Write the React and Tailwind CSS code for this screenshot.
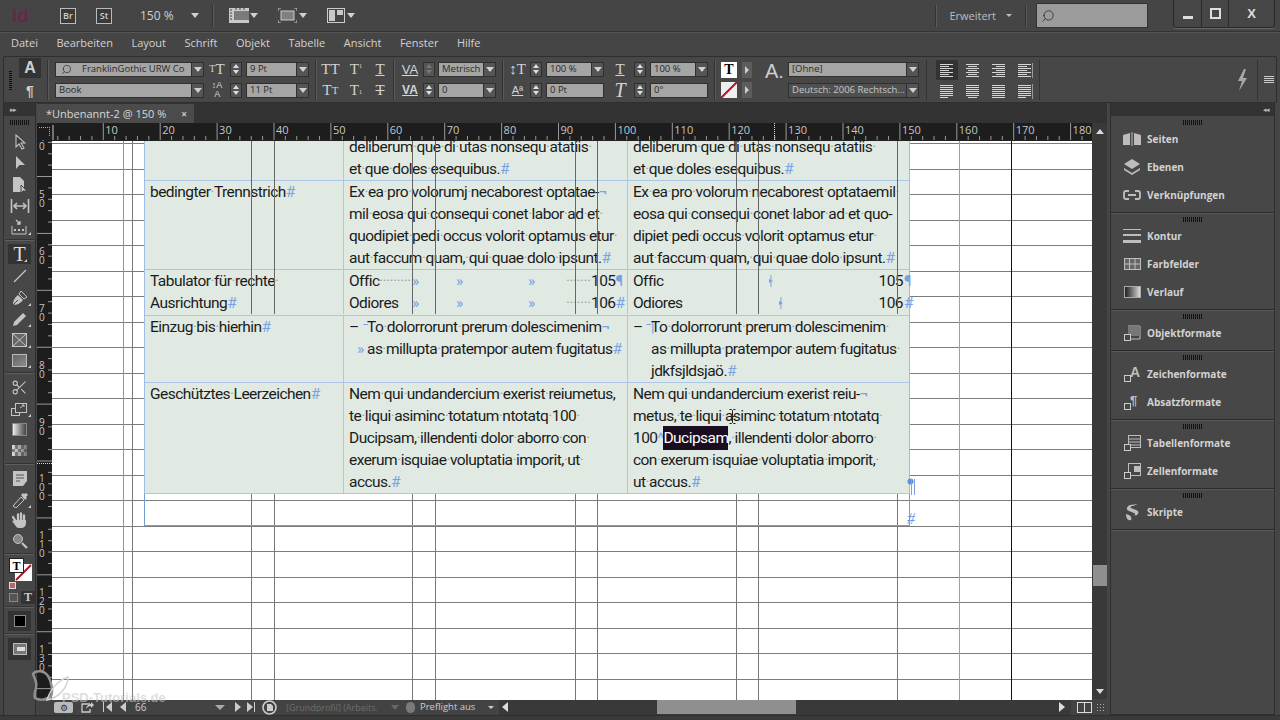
import { Scissors, Search } from 'lucide-react';

const MENU = ['Datei', 'Bearbeiten', 'Layout', 'Schrift', 'Objekt', 'Tabelle', 'Ansicht', 'Fenster', 'Hilfe'];
const H_LINES = Array.from({ length: 22 }, (_, i) => 2 + i * 25.5);
const V_LINES = [71, 80, 199, 222, 360, 383, 523, 545, 684, 706, 845];

function Ic({ w = 16, h = 16, vb, className = '', children }) {
  return (
    <svg width={w} height={h} viewBox={vb || `0 0 ${w} ${h}`} className={`shrink-0 ${className}`} fill="none">
      {children}
    </svg>
  );
}

function Grip({ className = '' }) {
  return <div className={`h-[5px] w-[20px] bg-[repeating-linear-gradient(90deg,#111_0_1px,#474747_1px_2px)] ${className}`} />;
}

function Arrow({ className = '' }) {
  return <div className={`w-0 h-0 border-l-[4px] border-r-[4px] border-t-[5px] border-l-transparent border-r-transparent border-t-[#d0d0d0] ${className}`} />;
}

function Field({ text, w, arrow = true, dark = false, children }) {
  return (
    <div className={`flex h-[15px] shrink-0 border border-[#2f2f2f] ${dark ? 'bg-[#505050] text-[#c8c8c8]' : 'bg-[#a5a5a5] text-[#2a2a2a]'}`} style={{ width: w }}>
      <div className="flex flex-1 items-center gap-1 overflow-hidden whitespace-nowrap pl-[3px] text-[9.5px] leading-none">
        {children}
        {text}
      </div>
      {arrow && (
        <div className="flex w-[12px] items-center justify-center border-l border-[#2f2f2f] bg-[#555]">
          <Arrow />
        </div>
      )}
    </div>
  );
}

function Spin({ dim = false }) {
  const c = dim ? 'border-b-[#777]' : 'border-b-[#ddd]';
  const d = dim ? 'border-t-[#777]' : 'border-t-[#ddd]';
  return (
    <div className="flex h-[15px] w-[12px] shrink-0 flex-col items-center justify-center gap-[2px] border border-[#2f2f2f] bg-[#555]">
      <div className={`h-0 w-0 border-x-[3px] border-b-[4px] border-x-transparent ${c}`} />
      <div className={`h-0 w-0 border-x-[3px] border-t-[4px] border-x-transparent ${d}`} />
    </div>
  );
}

function Sep() {
  return <div className="mx-[6px] h-[40px] w-px shrink-0 self-center bg-[#333] shadow-[1px_0_0_#5a5a5a]" />;
}

function Glyph({ children, w = 17, className = '' }) {
  return (
    <div className={`flex h-[15px] shrink-0 items-center justify-center font-['Liberation_Serif',serif] text-[15px] leading-none text-[#d4d4d4] ${className}`} style={{ width: w }}>
      {children}
    </div>
  );
}

function AlignIcon({ rows, bar }) {
  return (
    <Ic w={16} h={15}>
      {rows.map(([x, w], i) => (
        <rect key={i} x={x} y={1 + i * 2} width={w} height="1" fill="#d6d6d6" />
      ))}
      {bar && <rect x="15" y="0" width="1" height="15" fill="#999" />}
    </Ic>
  );
}

const AL_LEFT = [[1, 13], [1, 9], [1, 13], [1, 9], [1, 13], [1, 9], [1, 13]];
const AL_CENTER = [[1, 13], [3, 9], [1, 13], [3, 9], [1, 13], [3, 9], [1, 13]];
const AL_RIGHT = [[1, 13], [5, 9], [1, 13], [5, 9], [1, 13], [5, 9], [1, 13]];
const AL_J1 = [[1, 13], [1, 13], [1, 13], [1, 13], [1, 13], [1, 13], [1, 8]];
const AL_J2 = [[1, 13], [1, 13], [1, 13], [1, 13], [1, 13], [1, 13], [3, 9]];
const AL_J3 = [[1, 13], [1, 13], [1, 13], [1, 13], [1, 13], [1, 13], [1, 13]];

function TitleBar() {
  return (
    <div className="flex h-[32px] shrink-0 items-center border-b border-[#333] pl-[12px] text-[#cfcfcf] shadow-[0_1px_0_#555]">
      <div className="w-[22px] font-['Liberation_Sans',sans-serif] text-[19px] font-bold leading-none text-[#6d2549]">Id</div>
      <div className="ml-[26px] flex h-[16px] w-[16px] items-center justify-center border border-[#bbb] bg-[#3a3a3a] text-[9px] font-semibold leading-none">Br</div>
      <div className="ml-[20px] flex h-[16px] w-[16px] items-center justify-center border border-[#bbb] bg-[#3a3a3a] text-[9px] font-semibold leading-none">St</div>
      <div className="ml-[28px] w-[44px] whitespace-nowrap text-[12px] leading-none">150 %</div>
      <Arrow className="ml-[7px]" />
      <div className="ml-[13px] h-[22px] w-px bg-[#333] shadow-[1px_0_0_#5a5a5a]" />
      <Ic w={20} h={15} className="ml-[16px]">
        <rect x="0" y="0" width="20" height="15" fill="#c9c9c9" />
        <rect x="5" y="3" width="15" height="9" fill="#7b7b7b" />
        <path d="M1 2h2M1 5h2M1 8h2M1 11h2M6 1h2M10 1h2M14 1h2" stroke="#444" />
      </Ic>
      <Arrow className="ml-[1px]" />
      <Ic w={19} h={15} className="ml-[20px]">
        <rect x="3" y="3" width="13" height="9" fill="#808080" stroke="#ccc" />
        <path d="M0 3V0h3M16 0h3v3M0 12v3h3M16 15h3v-3" stroke="#ccc" />
      </Ic>
      <Arrow className="ml-[2px]" />
      <Ic w={18} h={15} className="ml-[20px]">
        <rect x="0.5" y="0.5" width="17" height="14" fill="#444" stroke="#ccc" />
        <rect x="2" y="2" width="6" height="11" fill="#c9c9c9" />
        <rect x="10" y="2" width="6" height="5" fill="#c9c9c9" />
      </Ic>
      <Arrow className="ml-[2px]" />

      <div className="ml-auto h-[22px] w-px bg-[#333] shadow-[1px_0_0_#5a5a5a]" />
      <div className="ml-[13px] whitespace-nowrap text-[11px] leading-none text-[#bdbdbd]">Erweitert</div>
      <div className="ml-[10px] h-0 w-0 border-x-[3px] border-t-[3px] border-x-transparent border-t-[#bbb]" />
      <div className="ml-[13px] h-[22px] w-px bg-[#333] shadow-[1px_0_0_#5a5a5a]" />
      <div className="ml-[10px] flex h-[25px] w-[112px] items-center border border-[#333] bg-[#9b9b9b] pl-[4px]">
        <Search size={14} strokeWidth={1.5} className="-scale-x-100 text-[#333]" />
      </div>
      <div className="ml-[25px] flex h-[28px] w-[102px] self-start rounded-b-[3px] border border-t-0 border-[#2a2a2a] bg-[#464646] shadow-[0_1px_0_#666]">
        <div className="flex w-[28px] items-end justify-center border-r border-[#2a2a2a] pb-[8px]"><div className="h-[3px] w-[10px] bg-[#ddd]" /></div>
        <div className="flex w-[27px] items-center justify-center border-r border-[#2a2a2a]"><div className="h-[11px] w-[11px] border-2 border-[#ddd]" /></div>
        <div className="flex flex-1 items-center justify-center font-['Liberation_Sans',sans-serif] text-[13px] font-bold leading-none text-[#ddd]">X</div>
      </div>
      <div className="w-[5px]" />
    </div>
  );
}

function MenuBar() {
  return (
    <div className="flex h-[24px] shrink-0 items-center gap-[18.5px] pb-[3px] pl-[11px] text-[11px] leading-none text-[#d2d2d2]">
      {MENU.map((m) => (
        <span key={m}>{m}</span>
      ))}
    </div>
  );
}

function ControlBar() {
  return (
    <div className="mx-[3px] flex h-[47px] shrink-0 items-stretch rounded-[2px] border border-[#2e2e2e] bg-[#474747]">
      <div className="ml-[5px] mt-[13px] h-[20px] w-[3px] bg-[repeating-linear-gradient(0deg,#111_0_1px,#474747_1px_2px)]" />
      <div className="ml-[7px] flex w-[22px] flex-col items-center">
        <div className="mt-[1px] flex h-[20px] w-[22px] items-center justify-center bg-[#333] font-['Liberation_Sans',sans-serif] text-[16px] font-bold leading-none text-[#cfcfcf]">A</div>
        <div className="mt-[4px] font-['Liberation_Sans',sans-serif] text-[14px] font-bold leading-[18px] text-[#cfcfcf]">¶</div>
      </div>
      <Sep />
      <div className="ml-[1px] flex flex-col justify-center gap-[6px]">
        <div className="flex items-center gap-[4px]">
          <Field w={149} text="FranklinGothic URW Co">
            <Search size={11} strokeWidth={1.6} className="ml-[2px] -scale-x-100 text-[#333]" />
            <span className="w-[2px]" />
          </Field>
          <Glyph w={18}><span className="text-[10px]">T</span>T</Glyph>
          <Spin />
          <Field w={63} text="9 Pt" />
        </div>
        <div className="flex items-center gap-[4px]">
          <Field w={149} text="Book" />
          <Glyph w={18}><span className="font-['Liberation_Sans',sans-serif] text-[9px] leading-[9px]">↕A<br />&nbsp;A</span></Glyph>
          <Spin />
          <Field w={63} text="11 Pt" />
        </div>
      </div>
      <Sep />
      <div className="flex flex-col justify-center gap-[6px]">
        <div className="flex gap-[9px]">
          <Glyph>TT</Glyph>
          <Glyph w={16}>T<sup className="text-[7px]">1</sup></Glyph>
          <Glyph w={14} className="underline">T</Glyph>
        </div>
        <div className="flex gap-[9px]">
          <Glyph>T<span className="text-[11px]">T</span></Glyph>
          <Glyph w={16}>T<sub className="text-[7px]">1</sub></Glyph>
          <Glyph w={14} className="line-through">T</Glyph>
        </div>
      </div>
      <Sep />
      <div className="flex flex-col justify-center gap-[6px]">
        <div className="flex items-center gap-[3px]">
          <Glyph w={20}><span className="font-['Liberation_Sans',sans-serif] text-[13px] underline">VA</span></Glyph>
          <Spin dim />
          <Field w={58} text="Metrisch" />
        </div>
        <div className="flex items-center gap-[3px]">
          <Glyph w={20}><span className="font-['Liberation_Sans',sans-serif] text-[12px] font-bold underline">VA</span></Glyph>
          <Spin />
          <Field w={58} text="0" />
        </div>
      </div>
      <Sep />
      <div className="flex flex-col justify-center gap-[6px]">
        <div className="flex items-center gap-[4px]">
          <Glyph>↕T</Glyph>
          <Spin />
          <Field w={58} text="100 %" />
          <Glyph w={20} className="ml-[2px] underline">T</Glyph>
          <Spin />
          <Field w={58} text="100 %" />
        </div>
        <div className="flex items-center gap-[4px]">
          <Glyph><span className="font-['Liberation_Sans',sans-serif] text-[11px] underline">Aª</span></Glyph>
          <Spin />
          <Field w={58} text="0 Pt" arrow={false} />
          <Glyph w={20} className="ml-[2px] italic !text-[20px]">T</Glyph>
          <Spin />
          <Field w={58} text="0°" arrow={false} />
        </div>
      </div>
      <Sep />
      <div className="flex flex-col justify-center gap-[4px]">
        <div className="flex items-center gap-[5px]">
          <div className="flex h-[16px] w-[16px] items-center justify-center bg-white font-['Liberation_Serif',serif] text-[14px] font-black leading-none text-black">T</div>
          <div className="flex h-[16px] w-[10px] items-center justify-center bg-[#5d5d5d]"><div className="h-0 w-0 border-y-[4px] border-l-[4px] border-y-transparent border-l-[#ccc]" /></div>
        </div>
        <div className="flex items-center gap-[5px]">
          <Ic w={16} h={16}>
            <rect width="16" height="16" fill="#eee" />
            <path d="M0 16 16 0" stroke="#b0132b" strokeWidth="2" />
          </Ic>
          <div className="flex h-[16px] w-[10px] items-center justify-center bg-[#5d5d5d]"><div className="h-0 w-0 border-y-[4px] border-l-[4px] border-y-transparent border-l-[#ccc]" /></div>
        </div>
      </div>
      <div className="ml-[13px] flex w-[23px] flex-col">
        <div className="mt-[2px] font-['Liberation_Sans',sans-serif] text-[20px] leading-[24px] text-[#cfcfcf]">A.</div>
      </div>
      <div className="flex flex-col justify-center gap-[6px]">
        <Field w={131} text="[Ohne]" />
        <Field w={131} text="Deutsch: 2006 Rechtsch..." dark />
      </div>
      <div className="ml-[7px] mr-[12px] h-[40px] w-px self-center bg-[#333]" />
      <div className="flex flex-col justify-center gap-[4px]">
        <div className="flex items-center gap-[10px]">
          <div className="-mx-[3px] flex h-[20px] w-[22px] items-center justify-center bg-[#333]"><AlignIcon rows={AL_LEFT} /></div>
          <AlignIcon rows={AL_CENTER} />
          <AlignIcon rows={AL_RIGHT} />
          <AlignIcon rows={AL_LEFT} bar />
        </div>
        <div className="flex items-center gap-[10px]">
          <AlignIcon rows={AL_J1} />
          <AlignIcon rows={AL_J2} />
          <AlignIcon rows={AL_J3} />
          <AlignIcon rows={AL_J1} bar />
        </div>
      </div>
      <div className="mx-[6px] h-[40px] w-px self-center bg-[#333]" />
      <div className="ml-auto flex items-center">
        <Ic w={12} h={22}>
          <path d="M8 0 2 12h4L3 22l8-13H7l3-9Z" fill="#a8a8a8" />
        </Ic>
        <div className="ml-[9px] h-[40px] w-px bg-[#333]" />
        <div className="ml-[6px] mr-[2px] flex flex-col gap-[1px]">
          {[0, 1, 2, 3].map((i) => <div key={i} className="h-px w-[10px] bg-[#ccc]" />)}
        </div>
      </div>
    </div>
  );
}

function Tool({ y, active, corner, children }) {
  return (
    <div className={`relative flex items-center justify-center ${active ? 'mx-[4px] bg-[#333]' : ''}`} style={{ height: y }}>
      {children}
      {corner && <div className="absolute bottom-[2px] right-[4px] h-0 w-0 border-b-[3px] border-l-[3px] border-l-transparent border-b-[#ccc]" />}
    </div>
  );
}

function ToolSep() {
  return <div className="mx-[1px] my-[3px] h-px bg-[#5e5e5e] shadow-[0_-1px_0_#333]" />;
}

function Toolbar() {
  const c = '#c4c4c4';
  return (
    <div className="ml-[3px] flex w-[33px] shrink-0 flex-col border-x border-[#2e2e2e] bg-[#474747]">
      <div className="flex h-[13px] items-center bg-[#333] pl-[6px]">
        <span className="text-[7px] leading-none tracking-[-1px] text-[#bbb]">▸▸</span>
      </div>
      <div className="mx-auto mt-[4px] mb-[6px]"><Grip /></div>
      <Tool y={21}><Ic w={12} h={16}><path d="M2 1v12l3-3 3 5 2-1-3-5h4Z" fill="#3a3a3a" stroke={c} strokeWidth="1.1" /></Ic></Tool>
      <Tool y={22}><Ic w={12} h={16}><path d="M2 1v13l3.5-4H11Z" fill={c} /></Ic></Tool>
      <Tool y={21}>
        <Ic w={16} h={18}>
          <path d="M1 1h7l4 4v6h-3v5H1Z" fill={c} />
          <path d="M9 9v8l2-2h4Z" fill={c} stroke="#474747" />
        </Ic>
      </Tool>
      <Tool y={21}>
        <Ic w={20} h={16}>
          <path d="M1.5 1v14M18.5 1v14M4 8h12" stroke={c} strokeWidth="1.6" />
          <path d="M7 5 4 8l3 3M13 5l3 3-3 3" stroke={c} strokeWidth="1.6" />
        </Ic>
      </Tool>
      <Tool y={21} corner>
        <Ic w={18} h={16}>
          <path d="M1 7v8h14V7" stroke={c} />
          <path d="M3 10h2v2H3ZM7 10h2v2H7ZM11 10h2v2h-2Z" fill={c} />
          <path d="M5 1l4 4M9 2v3H6" stroke={c} strokeWidth="1.3" />
        </Ic>
      </Tool>
      <ToolSep />
      <Tool y={20} active corner>
        <span className="font-['Liberation_Serif',serif] text-[20px] leading-none text-[#ddd]">T</span>
      </Tool>
      <Tool y={23}><Ic w={14} h={14}><path d="M1 13 13 1" stroke={c} strokeWidth="1.2" /></Ic></Tool>
      <Tool y={21} corner>
        <Ic w={16} h={16}>
          <path d="M1 15C1 9 4 7 6 5l5 5c-2 2-4 5-10 5Z" fill={c} />
          <path d="m7 4 2-3 6 6-3 2Z" stroke={c} />
          <path d="M1 15 6 10" stroke="#474747" />
        </Ic>
      </Tool>
      <Tool y={21} corner>
        <Ic w={16} h={16}>
          <path d="M1 15l1-4L11 2l3 3-9 9Z" fill={c} />
        </Ic>
      </Tool>
      <Tool y={21} corner>
        <Ic w={15} h={14}>
          <rect x="0.5" y="0.5" width="14" height="13" fill="#666" stroke={c} />
          <path d="M1 1l13 12M14 1 1 13" stroke={c} />
        </Ic>
      </Tool>
      <Tool y={20} corner>
        <div className="h-[13px] w-[15px] border border-[#bbb] bg-linear-to-br from-[#666] to-[#8b8b8b]" />
      </Tool>
      <ToolSep />
      <Tool y={21}><Scissors size={17} strokeWidth={1.5} color={c} /></Tool>
      <Tool y={21} corner>
        <Ic w={17} h={15}>
          <rect x="0.5" y="7.5" width="8" height="7" stroke={c} />
          <rect x="4.5" y="2.5" width="11" height="9" stroke={c} fill="#474747" />
          <path d="M9 7l4-3M11 4h2v2" stroke={c} />
        </Ic>
      </Tool>
      <Tool y={21}><div className="h-[13px] w-[15px] border border-[#888] bg-linear-to-r from-[#eee] to-[#444]" /></Tool>
      <Tool y={21}>
        <div className="grid h-[11px] w-[15px] grid-cols-5 bg-linear-to-r from-[#ddd] to-[#777]">
          {Array.from({ length: 15 }, (_, i) => (
            <div key={i} className={i % 2 ? 'bg-[#444]/60' : ''} />
          ))}
        </div>
      </Tool>
      <ToolSep />
      <Tool y={21}>
        <Ic w={14} h={15}>
          <path d="M0 0h14v10l-4 5H0Z" fill={c} />
          <path d="M3 4h8M3 7h8M3 10h4" stroke="#555" />
        </Ic>
      </Tool>
      <Tool y={21} corner>
        <Ic w={18} h={16}>
          <path d="M2 14 10 5l3 3-8 8Z" stroke={c} />
          <path d="m10 3 2-2 1 1 2-1 2 2-2 2 1 1-2 2Z" fill={c} />
        </Ic>
      </Tool>
      <Tool y={20}>
        <Ic w={17} h={17}>
          <path d="M4.5 9 2 5M7 8V2.5M10 8V1.5M13 8.500V3.500" stroke={c} strokeWidth="2.3" strokeLinecap="round" />
          <path d="M4 8h11v3c0 3-2 5-5 5H8c-2 0-3-1-4-3L1 9Z" fill={c} />
        </Ic>
      </Tool>
      <Tool y={21}>
        <Ic w={16} h={16}>
          <circle cx="6" cy="6" r="4.5" fill="#888" stroke={c} />
          <path d="m10 10 5 5" stroke={c} strokeWidth="2.2" />
        </Ic>
      </Tool>
      <ToolSep />
      <div className="relative h-[33px] shrink-0">
        <div className="absolute left-[11px] top-[6px] h-[17px] w-[17px] bg-white">
          <Ic w={17} h={17}><path d="M1 16 16 1" stroke="#b0132b" strokeWidth="2" /></Ic>
        </div>
        <div className="absolute left-[5px] top-0 flex h-[15px] w-[15px] items-center justify-center border border-[#222] bg-white font-['Liberation_Serif',serif] text-[12px] font-black leading-none text-black">T</div>
        <div className="absolute left-[5px] top-[24px] h-[7px] w-[7px] border border-[#ddd] bg-[#b66]" />
      </div>
      <div className="flex h-[13px] items-center gap-[3px] pl-[5px]">
        <div className="h-[9px] w-[9px] border border-[#888] bg-[#555]" />
        <div className="bg-[#333] px-[3px] font-['Liberation_Serif',serif] text-[12px] font-bold leading-[13px] text-[#ccc]">T</div>
      </div>
      <ToolSep />
      <div className="relative mx-[4px] flex h-[20px] items-center justify-center bg-[#333]">
        <div className="h-[12px] w-[12px] border border-[#888] bg-black" />
      </div>
      <ToolSep />
      <div className="relative mx-[4px] flex h-[22px] items-center justify-center bg-[#333]">
        <div className="h-[12px] w-[14px] border border-[#bbb] bg-[#777]">
          <div className="ml-[3px] mt-[3px] h-[4px] w-[8px] bg-[#ddd]" />
        </div>
      </div>
    </div>
  );
}

function TopRuler() {
  const ticks = [];
  for (let v = 1; v < 1040 / 11.38; v++) ticks.push(v);
  return (
    <svg width="1040" height="17" className="block">
      {ticks.map((i) => {
        const x = i * 11.38 - 5.6;
        const major = i % 5 === 0;
        return <line key={i} x1={x} x2={x} y1={major ? 0 : 13} y2={17} stroke="#9a9a9a" strokeWidth="1" />;
      })}
      {Array.from({ length: 18 }, (_, i) => (
        <text key={i} x={51.3 + i * 56.9 + 2} y="11" fill="#c6c6c6" fontSize="11" fontFamily="Open Sans, sans-serif">{(i + 1) * 10}</text>
      ))}
      <line x1="1" x2="1" y1="2" y2="17" stroke="#ccc" />
      <line x1="722.5" x2="722.5" y1="0" y2="17" stroke="#ddd" strokeDasharray="1 1" />
    </svg>
  );
}

function LeftRuler() {
  const ticks = [];
  for (let i = 0; i < 50; i++) ticks.push(i);
  const labels = ['40', '50', '60', '70', '80', '90', '100', '110', '120', '130'];
  return (
    <svg width="15" height="560" className="block">
      {ticks.map((i) => {
        const y = i * 11.38 - 9;
        return <line key={i} x1={i % 5 === 4 ? 0 : 11} x2={15} y1={y} y2={y} stroke="#9a9a9a" />;
      })}
      {labels.map((s, i) => {
        const top = -9 + i * 56.9;
        return s.split('').map((ch, j) => (
          <text key={`${i}-${j}`} x="2" y={top + 10 + j * 9} fill="#c6c6c6" fontSize="10" fontFamily="Open Sans, sans-serif">{ch}</text>
        ));
      })}
      <line x1="0" x2="15" y1="323.5" y2="323.5" stroke="#ddd" strokeDasharray="1 1" />
    </svg>
  );
}

function Words({ t }) {
  const parts = t.split(/( |#|¶|¬|»)/).filter(Boolean);
  return parts.map((p, i) => {
    if (p === ' ') return <span key={i} className="text-[#9aa89e]">·</span>;
    if (p === '#' || p === '¶' || p === '¬' || p === '»') return <span key={i} className="text-[#7aa2e3]">{p}</span>;
    return <span key={i}>{p}</span>;
  });
}

function L({ children, t, className = '' }) {
  return (
    <div className={`h-[22px] whitespace-nowrap leading-[22px] ${className}`}>
      {t && <Words t={t} />}
      {children}
    </div>
  );
}

function TabMark() {
  return (
    <Ic w={6} h={12} className="inline-block align-[-1px]">
      <path d="M3 0v12" stroke="#7aa2e3" />
      <path d="M1 4l4 2-4 2Z" fill="#7aa2e3" />
    </Ic>
  );
}

function Cell({ first, children }) {
  return <div className={`pl-[5px] ${first ? '' : 'border-l border-[#abc6e6]'}`}>{children}</div>;
}

function Row({ a, b, c, extra = '' }) {
  return (
    <div className={`grid grid-cols-[198px_284px_282px] border-b border-[#abc6e6] ${extra}`}>
      <Cell first>{a}</Cell>
      <Cell>{b}</Cell>
      <Cell>{c}</Cell>
    </div>
  );
}

function TabRow({ name, nameW, tail, mark }) {
  return (
    <L className="flex items-center">
      <span style={{ width: nameW }}>{name}</span>
      {mark}
      <span className="w-[44px] text-[#7aa2e3]">»</span>
      <span className="w-[72px] text-[#7aa2e3]">»</span>
      <span className="w-[38px] text-[#7aa2e3]">»</span>
      <span className="w-[25px] overflow-hidden text-[#9aa89e]">········</span>
      <span>{tail}</span>
    </L>
  );
}

function DocTable() {
  return (
    <div className="relative z-10 -mt-[5px] ml-[92px] w-[766px] border-x border-[#9dbce6] bg-[#e0eae3] font-['Roboto',sans-serif] text-[15.5px] tracking-[-0.035em] text-[#1b1b1b]">
      <Row
        a={<><L /><L /></>}
        b={<><L t="deliberum que di utas nonsequ atatiis " /><L t="et que doles esequibus.#" /></>}
        c={<><L t="deliberum que di utas nonsequ atatiis " /><L t="et que doles esequibus.#" /></>}
      />
      <Row
        a={<L t="bedingter Trennstrich#" />}
        b={<><L t="Ex ea pro volorumj necaborest optatae-¬" /><L t="mil eosa qui consequi conet labor ad et " /><L t="quodipiet pedi occus volorit optamus etur " /><L t="aut faccum quam, qui quae dolo ipsunt.#" /></>}
        c={<><L t="Ex ea pro volorum necaborest optataemil " /><L t="eosa qui consequi conet labor ad et quo-" /><L t="dipiet pedi occus volorit optamus etur " /><L t="aut faccum quam, qui quae dolo ipsunt.#" /></>}
      />
      <Row
        extra="pb-px"
        a={<><L t="Tabulator für rechte " /><L t="Ausrichtung#" /></>}
        b={
          <>
            <TabRow
              name="Offic"
              nameW={25}
              mark={<span className="w-[38px] overflow-hidden pl-[5px] text-[#9aa89e]">··········</span>}
              tail={<>105<span className="text-[#7aa2e3]">¶</span></>}
            />
            <TabRow
              name="Odiores"
              nameW={63}
              tail={<>106<span className="text-[#7aa2e3]">#</span></>}
            />
          </>
        }
        c={
          <>
            <L className="flex items-center">
              <span className="w-[135px]">Offic</span>
              <TabMark />
              <span className="ml-auto mr-[1px]">105</span>
              <span className="w-[5px] text-[#7aa2e3]">¶</span>
            </L>
            <L className="flex items-center">
              <span className="w-[145px]">Odiores</span>
              <TabMark />
              <span className="ml-auto mr-[1px]">106</span>
              <span className="w-[5px] text-[#7aa2e3]">#</span>
            </L>
          </>
        }
      />
      <Row
        a={<L t="Einzug bis hierhin#" />}
        b={
          <>
            <L className="flex">
              <span className="w-[18px]">–<span className="ml-[4px] text-[#7aa2e3]">⁻</span></span>
              <span><Words t="To dolorrorunt prerum dolescimenim¬" /></span>
            </L>
            <L className="flex">
              <span className="w-[18px] pl-[8px] text-[#7aa2e3]">»</span>
              <span><Words t="as millupta pratempor autem fugitatus#" /></span>
            </L>
            <L />
          </>
        }
        c={
          <>
            <L className="flex">
              <span className="w-[18px]">–<span className="ml-[3px] text-[#7aa2e3]">⁻|</span></span>
              <span><Words t="To dolorrorunt prerum dolescimenim " /></span>
            </L>
            <L className="pl-[18px]" t="as millupta pratempor autem fugitatus " />
            <L className="pl-[18px]" t="jdkfsjldsjaö.#" />
          </>
        }
      />
      <Row
        a={<L t="Geschütztes Leerzeichen#" />}
        b={<><L t="Nem qui undandercium exerist reiumetus," /><L t="te liqui asiminc totatum ntotatq 100 " /><L t="Ducipsam, illendenti dolor aborro con " /><L t="exerum isquiae voluptatia imporit, ut " /><L t="accus.#" /></>}
        c={
          <>
            <L t="Nem qui undandercium exerist reiu-¬" />
            <L t="metus, te liqui asiminc totatum ntotatq " />
            <L>
              100<span className="text-[#7aa2e3]">^</span>
              <span className="bg-[#1a0d1f] py-[3px] text-white">Ducipsam</span>
              <Words t=", illendenti dolor aborro " />
            </L>
            <L t="con exerum isquiae voluptatia imporit, " />
            <L t="ut accus.#" />
          </>
        }
      />
    </div>
  );
}

function Canvas() {
  return (
    <div className="relative h-[560px] w-[1040px] shrink-0 overflow-hidden border-t border-[#222] bg-white">
      {H_LINES.map((y, i) => (
        <div key={i} className="absolute left-0 right-0 h-px bg-[#7d7d7d]" style={{ top: y }} />
      ))}
      {V_LINES.map((x) => (
        <div key={x} className="absolute top-0 bottom-0 w-px bg-[#777]" style={{ left: x }} />
      ))}
      <div className="absolute top-0 bottom-0 left-[71px] w-px bg-[#6ba2bd]" />
      <div className="absolute top-0 bottom-0 left-[907px] w-px bg-[#7ba7c9]" />
      <div className="absolute top-0 bottom-0 left-[959px] w-px bg-[#111]" />

      <DocTable />

      {/* guides that stay on top of the upper rows */}
      <div className="absolute left-0 top-0 z-20 h-[173px] w-full">
        {[199, 222, 360, 383, 523, 545, 684, 706, 845].map((x) => (
          <div key={x} className="absolute top-0 bottom-0 w-px bg-[#666]" style={{ left: x }} />
        ))}
      </div>

      {/* text frame below the table */}
      <div className="absolute left-[92px] top-[353px] z-10 h-[32px] w-[766px] border-x border-b border-[#6f9fd0]" />
      <Ic w={9} h={18} className="absolute left-[855px] top-[337px] z-20">
        <circle cx="3.500" cy="3.500" r="3" fill="#5f8fe0" />
        <path d="M4.500 1v16M7.500 1v16" stroke="#7aa2e3" />
      </Ic>
      <div className="absolute left-[855px] top-[370px] z-20 font-['Liberation_Serif',serif] text-[16px] italic leading-none text-[#6f9ae0]">#</div>
      <Ic w={7} h={15} className="absolute left-[677px] top-[268px] z-30">
        <path d="M0.500 0.500h2l1 1 1-1h2M3.500 1.500v12M0.500 14.500h2l1-1 1 1h2M1.500 7.500h4" stroke="#222" />
      </Ic>
    </div>
  );
}

function VScroll() {
  return (
    <div className="flex w-[15px] shrink-0 flex-col items-center bg-[#393939] pt-[7px] pb-[5px]">
      <div className="-mt-[18px] h-0 w-0 border-x-[4px] border-b-[5px] border-x-transparent border-b-[#ddd]" />
      <div className="mt-[431px] h-[21px] w-[14px] bg-[#8f8f8f]" />
      <div className="mt-auto h-0 w-0 border-x-[4px] border-t-[5px] border-x-transparent border-t-[#ddd]" />
    </div>
  );
}

function BottomBar() {
  const tri = 'h-0 w-0 border-y-[5px] border-y-transparent';
  return (
    <div className="flex h-[16px] shrink-0 items-center bg-[#434343] text-[10px] leading-none text-[#cfcfcf]">
      <div className="ml-[17px] flex h-[11px] w-[19px] items-center justify-center rounded-[2px] bg-[#bbb] text-[9px] leading-none text-[#333]">⚙</div>
      <Ic w={13} h={12} className="ml-[8px]">
        <path d="M9 3H1v8h8V8" stroke="#ccc" strokeWidth="1.3" />
        <path d="M5 8c0-3 3-5 5-5V1l3 3-3 3V5C8 5 6 6 5 8Z" fill="#ccc" />
      </Ic>
      <div className="ml-[9px] mr-[2px] h-[10px] w-px bg-[#ccc]" />
      <div className={`${tri} border-r-[6px] border-r-[#ccc]`} />
      <div className={`ml-[8px] ${tri} border-r-[6px] border-r-[#ccc]`} />
      <div className="ml-[9px] w-[80px]">66</div>
      <Arrow className="!border-t-[#aaa] !border-l-[5px] !border-r-[5px]" />
      <div className={`ml-[10px] ${tri} border-l-[6px] border-l-[#ccc]`} />
      <div className={`ml-[6px] ${tri} border-l-[6px] border-l-[#ccc]`} />
      <div className="ml-[1px] h-[10px] w-px bg-[#ccc]" />
      <Ic w={15} h={15} className="ml-[7px]">
        <circle cx="7.500" cy="7.500" r="6.500" stroke="#ccc" strokeWidth="1.6" />
        <path d="M5 4h4l2 2v5H5Z" fill="#ccc" />
      </Ic>
      <div className="ml-[9px] w-[91px] overflow-hidden whitespace-nowrap text-[9px] text-[#6e6e6e]">[Grundprofil] (Arbeits...</div>
      <Arrow className="ml-[14px] !border-t-[#666]" />
      <div className="ml-[7px] h-[11px] w-[9px] rounded-full bg-[#7a7a7a]" />
      <div className="ml-[5px] w-[68px] whitespace-nowrap text-[9.500px]">Preflight aus</div>
      <div className="h-0 w-0 border-x-[3px] border-t-[3px] border-x-transparent border-t-[#ccc]" />
      <div className="ml-[5px] flex h-full flex-1 items-center bg-[#393939]">
        <div className={`ml-[3px] ${tri} border-r-[6px] border-r-[#ddd]`} />
        <div className="ml-[149px] h-[14px] w-[139px] bg-[#8f8f8f]" />
        <div className={`ml-auto mr-[6px] ${tri} border-l-[6px] border-l-[#ddd]`} />
      </div>
      <Ic w={15} h={11} className="ml-[6px] mr-[3px]">
        <rect x="0.5" y="0.5" width="14" height="10" stroke="#ddd" />
        <path d="M7.5 0v11" stroke="#ddd" />
      </Ic>
      <div className="ml-[1px] h-[9px] w-[10px] bg-[radial-gradient(#aaa_1px,transparent_1px)] bg-[length:3px_3px]" />
      <div className="w-[1px]" />
    </div>
  );
}

function StyleBadge() {
  return <rect x="1.5" y="9.5" width="6" height="6" fill="#474747" stroke="#ccc" />;
}

function PanelItem({ name, icon }) {
  return (
    <div className="flex h-[28px] items-center">
      <div className="flex w-[36px] justify-center pl-[6px]">{icon}</div>
      <span className="text-[10px] font-bold leading-none text-[#d2d2d2]">{name}</span>
    </div>
  );
}

const C = '#bdbdbd';
const PANELS = [
  [
    ['Seiten', <Ic w={18} h={14}><path d="M0 3 7 1v12H0ZM11 1l7 2v10h-7Z" fill={C} /><path d="M9 0v14" stroke={C} /></Ic>],
    ['Ebenen', <Ic w={18} h={16}><path d="M9 0l8 5-8 5-8-5Z" fill={C} /><path d="M1 9l8 5 8-5v2l-8 5-8-5Z" fill={C} /></Ic>],
    ['Verknüpfungen', <Ic w={18} h={10}><path d="M6 1H3Q1 1 1 3v4q0 2 2 2h3M12 1h3q2 0 2 2v4q0 2-2 2h-3M5 5h8" stroke={C} strokeWidth="1.8" /></Ic>],
  ],
  [
    ['Kontur', <Ic w={18} h={14}><rect width="18" height="1" y="0" fill={C} /><rect width="18" height="2" y="5" fill={C} /><rect width="18" height="3" y="11" fill={C} /></Ic>],
    ['Farbfelder', <Ic w={17} h={12}><rect x="0.5" y="0.5" width="16" height="11" fill="#666" stroke={C} /><path d="M5.5 0v12M11 0v12M0 6h17" stroke={C} /></Ic>],
    ['Verlauf', <div className="h-[12px] w-[17px] border border-[#aaa] bg-linear-to-r from-[#222] to-[#ddd]" />],
  ],
  [
    ['Objektformate', <Ic w={18} h={17}><path d="M5 1h12v13H8" stroke={C} /><rect x="5" y="1" width="12" height="10" fill="#777" /><StyleBadge /></Ic>],
  ],
  [
    ['Zeichenformate', <Ic w={19} h={17}><text x="7" y="11" fontSize="14" fontWeight="700" fill={C} fontFamily="Liberation Sans, sans-serif">A</text><StyleBadge /></Ic>],
    ['Absatzformate', <Ic w={18} h={17}><text x="7" y="11" fontSize="13" fontWeight="700" fill={C} fontFamily="Liberation Sans, sans-serif">¶</text><StyleBadge /></Ic>],
  ],
  [
    ['Tabellenformate', <Ic w={18} h={17}><rect x="5.5" y="0.5" width="12" height="12" stroke={C} /><path d="M6 4h11M6 7h11M6 10h11" stroke={C} /><StyleBadge /></Ic>],
    ['Zellenformate', <Ic w={18} h={17}><rect x="5.5" y="0.5" width="12" height="12" stroke={C} /><rect x="11" y="3" width="6" height="6" fill={C} /><StyleBadge /></Ic>],
  ],
  [
    ['Skripte', <Ic w={14} h={18}><path d="M13 1 5 2C1 4 1 7 4 8l5 2c2 1 1 3-1 3l4-1c2-2 2-4-1-5L6 5c-1-1 0-2 2-2ZM1 11l3 1c2 1 3 3 2 5-3 1-5-2-5-6Z" fill={C} /></Ic>],
  ],
];

function Panel() {
  return (
    <div className="ml-[3px] flex w-[165px] shrink-0 flex-col border-x border-b border-[#2e2e2e] bg-[#474747]">
      <div className="flex h-[13px] shrink-0 items-center justify-end bg-[#333] pr-[5px]">
        <span className="text-[7px] leading-none tracking-[-1px] text-[#bbb]">◂◂</span>
      </div>
      {PANELS.map((items, i) => (
        <div key={i} className="border-b border-[#2a2a2a] pt-[4px] pb-[3px] shadow-[0_1px_0_#5a5a5a]">
          <Grip className="mx-auto" />
          {items.map(([name, icon]) => (
            <PanelItem key={name} name={name} icon={icon} />
          ))}
        </div>
      ))}
    </div>
  );
}

export default function App() {
  return (
    <div className="relative flex h-[720px] w-[1280px] flex-col overflow-hidden bg-[#454545] font-['Open_Sans',sans-serif]">
      <TitleBar />
      <MenuBar />
      <ControlBar />
      <div className="flex h-[612px] shrink-0">
        <Toolbar />
        <div className="ml-[1px] flex w-[1070px] shrink-0 flex-col bg-[#333]">
          {/* document tab */}
          <div className="flex h-[20px] shrink-0 items-end bg-[#333]">
            <div className="flex h-[19px] w-[157px] items-center bg-[#4b4b4b] pl-[9px] text-[11px] font-medium leading-none text-[#d8d8d8]">
              *Unbenannt-2 @ 150 %
              <span className="ml-auto mr-[7px] text-[10px] font-bold text-[#ccc]">×</span>
            </div>
          </div>
          <div className="flex h-[17px] shrink-0">
            <div className="w-[15px] bg-[#1d1d1d] p-[2px]">
              <div className="mt-[2px] h-[9px] w-[11px] border-t border-r border-dotted border-[#aaa]" />
            </div>
            <div className="w-[1040px] bg-[#1d1d1d]"><TopRuler /></div>
            <div className="w-[15px] bg-[#393939]" />
          </div>
          <div className="flex h-[559px] shrink-0">
            <div className="w-[15px] bg-[#1d1d1d]"><LeftRuler /></div>
            <Canvas />
            <VScroll />
          </div>
          <BottomBar />
        </div>
        <Panel />
      </div>
      <div className="h-[5px] border-t border-[#2e2e2e] bg-[#3a3a3a]" />

      {/* tutorial watermark */}
      <div className="pointer-events-none absolute left-[30px] top-[668px] z-40 h-[45px] w-[150px]">
        <Ic w={42} h={36}>
          <path d="M3 6C6 2 14 2 18 8C22 14 23 24 21 28C16 33 8 32 5 30C3 24 8 20 6 14Z" stroke="#8f8f8f" strokeWidth="2.5" />
          <path d="M17 32C20 22 28 12 38 9C38 20 28 30 17 32Z" stroke="#d4d4d4" strokeWidth="1.5" />
        </Ic>
        <div className="absolute left-[32px] top-[23px] whitespace-nowrap font-['Liberation_Sans',sans-serif] text-[13px] font-bold leading-none text-[#c8c8c8]/60">PSD-Tutorials.de</div>
      </div>
    </div>
  );
}
